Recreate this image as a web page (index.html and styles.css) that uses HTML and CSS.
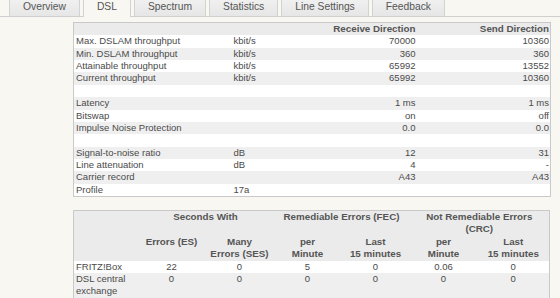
FILE: index.html
```html
<!DOCTYPE html>
<html>
<head>
<meta charset="utf-8">
<link rel="stylesheet" href="styles.css">
</head>
<body>
<div class="tabs">
  <span class="tab">Overview</span>
  <span class="tab active">DSL</span>
  <span class="tab">Spectrum</span>
  <span class="tab">Statistics</span>
  <span class="tab">Line Settings</span>
  <span class="tab">Feedback</span>
</div>
<div class="content">
  <table class="dsl">
    <colgroup><col class="c-label"><col class="c-unit"><col class="c-rx"><col class="c-tx"></colgroup>
    <tr class="head"><th></th><th></th><th class="num">Receive Direction</th><th class="num">Send Direction</th></tr>
    <tr><td>Max. DSLAM throughput</td><td>kbit/s</td><td class="num">70000</td><td class="num">10360</td></tr>
    <tr class="alt"><td>Min. DSLAM throughput</td><td>kbit/s</td><td class="num">360</td><td class="num">360</td></tr>
    <tr><td>Attainable throughput</td><td>kbit/s</td><td class="num">65992</td><td class="num">13552</td></tr>
    <tr class="alt"><td>Current throughput</td><td>kbit/s</td><td class="num">65992</td><td class="num">10360</td></tr>
    <tr><td>&nbsp;</td><td></td><td></td><td></td></tr>
    <tr class="alt"><td>Latency</td><td></td><td class="num">1 ms</td><td class="num">1 ms</td></tr>
    <tr><td>Bitswap</td><td></td><td class="num">on</td><td class="num">off</td></tr>
    <tr class="alt"><td>Impulse Noise Protection</td><td></td><td class="num">0.0</td><td class="num">0.0</td></tr>
    <tr><td>&nbsp;</td><td></td><td></td><td></td></tr>
    <tr class="alt"><td>Signal-to-noise ratio</td><td>dB</td><td class="num">12</td><td class="num">31</td></tr>
    <tr><td>Line attenuation</td><td>dB</td><td class="num">4</td><td class="num">-</td></tr>
    <tr class="alt"><td>Carrier record</td><td></td><td class="num">A43</td><td class="num">A43</td></tr>
    <tr><td>Profile</td><td>17a</td><td></td><td></td></tr>
  </table>

  <table class="errors">
    <colgroup><col class="e-label"><col class="e-col"><col class="e-col"><col class="e-col"><col class="e-col"><col class="e-col"><col class="e-last"></colgroup>
    <tr class="head">
      <th></th>
      <th colspan="2">Seconds With</th>
      <th colspan="2">Remediable Errors (FEC)</th>
      <th colspan="2">Not Remediable Errors (CRC)</th>
    </tr>
    <tr class="head">
      <th></th>
      <th>Errors (ES)</th>
      <th>Many<br>Errors (SES)</th>
      <th>per<br>Minute</th>
      <th>Last<br>15 minutes</th>
      <th>per<br>Minute</th>
      <th>Last<br>15 minutes</th>
    </tr>
    <tr><td class="lbl">FRITZ!Box</td><td>22</td><td>0</td><td>5</td><td>0</td><td>0.06</td><td>0</td></tr>
    <tr class="alt"><td class="lbl">DSL central exchange</td><td>0</td><td>0</td><td>0</td><td>0</td><td>0</td><td>0</td></tr>
  </table>
</div>
</body>
</html>
```

FILE: styles.css
```css
html, body {
  margin: 0;
  padding: 0;
  background: #f8f7f2;
  font-family: "Liberation Sans", Arial, sans-serif;
  color: #4a4a4a;
}

.tabs {
  display: flex;
  gap: 3px;
  padding-left: 9px;
  height: 16px;
  border-bottom: 1px solid #cfcfcf;
  align-items: flex-end;
}

.tab {
  height: 16px;
  box-sizing: border-box;
  padding: 1px 13px 0;
  font-size: 10.3px;
  line-height: 12px;
  color: #555;
  background: linear-gradient(#f0f0f0, #e6e6e6);
  border-left: 1px solid #d2d2d2;
  border-right: 1px solid #d2d2d2;
  text-align: center;
}

.tab.active {
  background: #f8f7f2;
  height: 17px;
  margin-bottom: -1px;
  position: relative;
}

.content {
  padding: 5px 0 0 73px;
}

table {
  border-collapse: collapse;
  width: 477px;
  table-layout: fixed;
  background: #ffffff;
  border: 1px solid #c9c9c9;
  font-size: 9.5px;
}

td, th {
  padding: 0 1px 0 2px;
  white-space: nowrap;
  overflow: hidden;
}

.dsl td, .dsl th {
  height: 12.36px;
  line-height: 12.36px;
}

.dsl .c-label { width: 158px; }
.dsl .c-unit { width: 68px; }
.dsl .c-rx { width: 118px; }
.dsl .c-tx { width: 133px; }

.head {
  background: #ebebeb;
}

th {
  font-weight: bold;
  font-size: 9.8px;
  color: #555;
}

.num { text-align: right; }

.dsl td.num, .dsl th.num { padding-right: 1px; }
.dsl td.num:nth-child(3), .dsl th.num:nth-child(3) { padding-right: 2px; }

.alt { background: #efefef; }

.errors {
  margin-top: 13px;
}

.errors .e-label { width: 64px; }
.errors .e-col { width: 68px; }
.errors .e-last { width: 72px; }

.errors th, .errors td {
  white-space: normal;
  text-align: center;
  vertical-align: top;
  line-height: 12px;
  padding: 0 2px;
}

.errors th,
.errors .alt td {
  padding-bottom: 1px;
}

.errors td.lbl {
  text-align: left;
  padding-left: 2px;
}
```
